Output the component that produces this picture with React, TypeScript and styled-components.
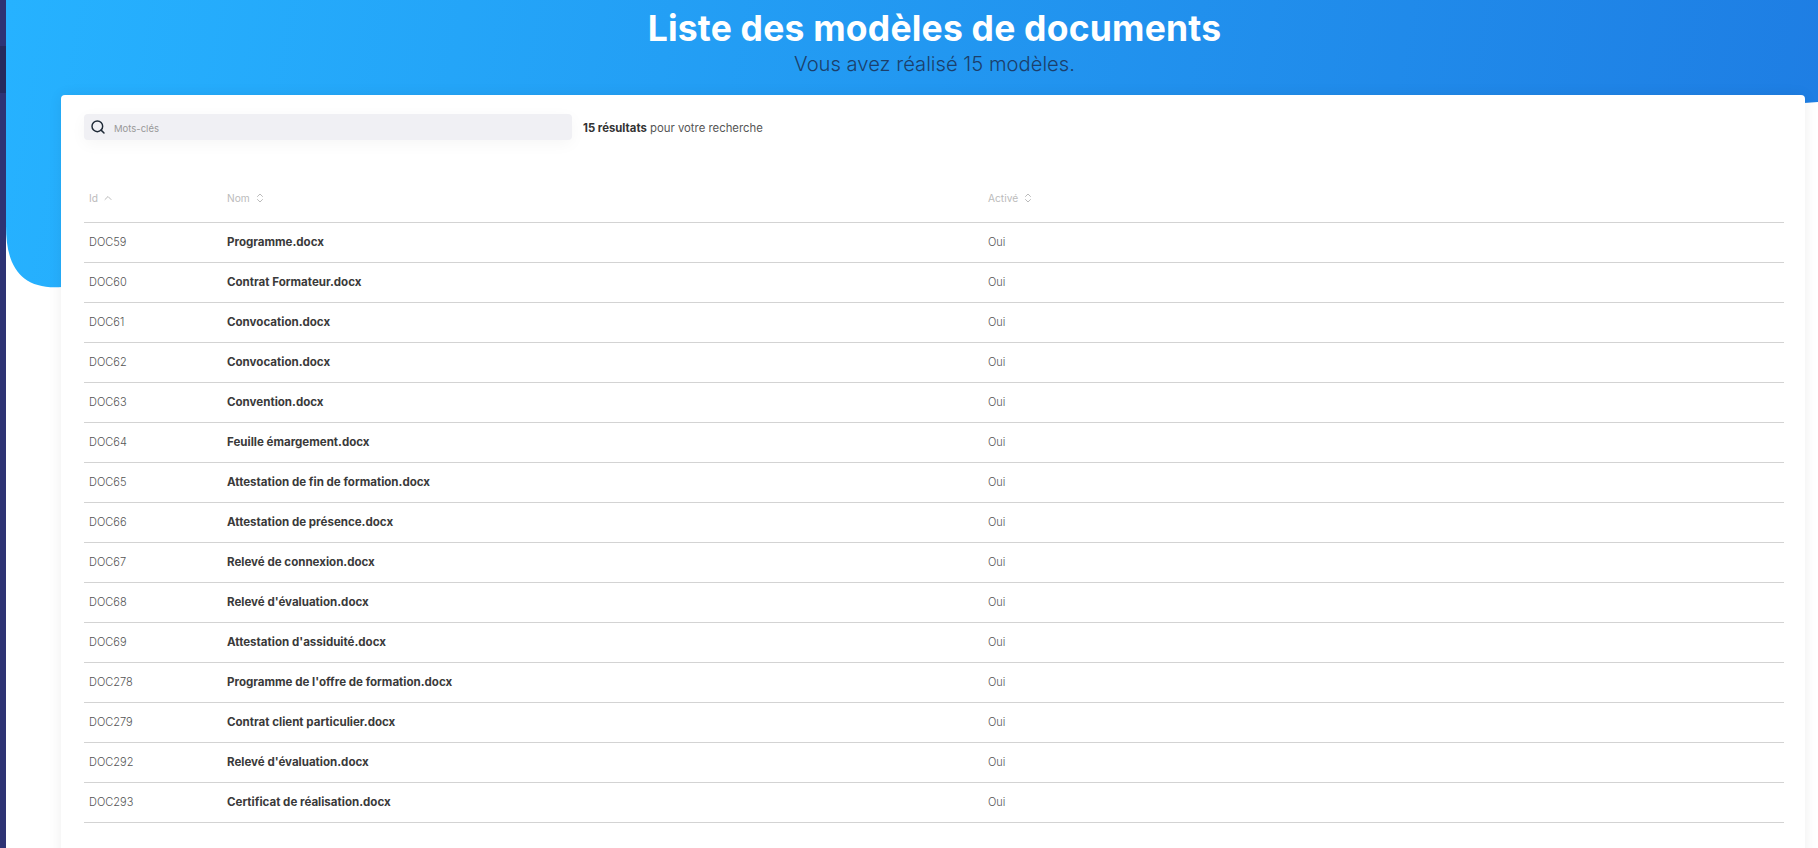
import React from 'react';
import styled, { createGlobalStyle } from 'styled-components';
import { ChevronUp, ChevronsUpDown, Search } from 'lucide-react';

const GlobalStyle = createGlobalStyle`
  html, body {
    margin: 0;
    height: 100%;
    overflow: hidden;
    background: #fff;
    font-family: Inter, "Open Sans", sans-serif;
  }
`;

const Page = styled.div`
  display: flex;
  height: 848px;
  overflow: hidden;
`;

const Sidebar = styled.aside`
  flex: 0 0 6px;
  padding-top: 46px;
  background: #2e3374;
`;

const SidebarActive = styled.div`
  height: 47px;
  background: #262a5c;
`;

const Main = styled.main`
  flex: 1;
  min-width: 0;
`;

const Hero = styled.header`
  box-sizing: border-box;
  height: 288px;
  margin-bottom: -193px;
  padding: 9px 0 0 45px;
  background: linear-gradient(100deg, #26b2ff 0%, #1e7de3 100%);
  clip-path: path('M0 0 H1812 V102 L1798 103 L56 287 C16 290 0 268 0 226 Z');
  text-align: center;
`;

const Title = styled.h1`
  margin: 0;
  color: #fff;
  font-size: 35.5px;
  font-weight: 700;
  line-height: 40px;
  letter-spacing: 0.2px;
`;

const Subtitle = styled.p`
  margin: 0;
  color: #1b3f6b;
  font-size: 20.2px;
  font-weight: 300;
  line-height: 30px;
`;

const Card = styled.section`
  position: relative;
  box-sizing: border-box;
  height: 800px;
  margin: 0 13px 0 55px;
  padding: 19px 21px 0 23px;
  background: #fff;
  border-radius: 4px;
  box-shadow: 0 0 14px rgba(0, 0, 0, 0.07);
`;

const Toolbar = styled.div`
  display: flex;
  align-items: center;
  gap: 11px;
`;

const SearchBox = styled.label`
  box-sizing: border-box;
  display: flex;
  align-items: center;
  gap: 8px;
  width: 488px;
  height: 26px;
  padding-left: 6px;
  background: #f0f0f4;
  border-radius: 4px;
  box-shadow: 0 4px 16px rgba(0, 0, 0, 0.04);
  color: #1f2a37;
`;

const SearchInput = styled.input`
  flex: 1;
  min-width: 0;
  padding: 2px 0 0;
  border: 0;
  outline: 0;
  background: transparent;
  font: inherit;
  font-size: 9.5px;

  &::placeholder {
    color: #999;
    opacity: 1;
  }
`;

const ResultCount = styled.p`
  margin: 0;
  padding-top: 2px;
  color: #555;
  font-size: 11.35px;

  strong {
    color: #333;
    font-weight: 700;
  }
`;

const Table = styled.table`
  width: 100%;
  margin-top: 32px;
  border-collapse: collapse;
  table-layout: fixed;
`;

const HeadCell = styled.th`
  height: 48px;
  padding: 2px 0 0 5px;
  border-bottom: 1px solid #d3d3d3;
  color: #bbb;
  font-size: 10.2px;
  font-weight: 400;
  text-align: left;
`;

const HeadLabel = styled.span`
  display: inline-flex;
  align-items: center;
  gap: 4px;
`;

const Cell = styled.td<{ $strong?: boolean }>`
  height: 37px;
  padding: 0 0 2px 5px;
  border-bottom: 1px solid #d3d3d3;
  color: ${(p) => (p.$strong ? '#3a3a3a' : '#555')};
  font-size: ${(p) => (p.$strong ? '11.55px' : '11px')};
  font-weight: ${(p) => (p.$strong ? 700 : 300)};
`;

const documents = [
  ['DOC59', 'Programme.docx'],
  ['DOC60', 'Contrat Formateur.docx'],
  ['DOC61', 'Convocation.docx'],
  ['DOC62', 'Convocation.docx'],
  ['DOC63', 'Convention.docx'],
  ['DOC64', 'Feuille émargement.docx'],
  ['DOC65', 'Attestation de fin de formation.docx'],
  ['DOC66', 'Attestation de présence.docx'],
  ['DOC67', 'Relevé de connexion.docx'],
  ['DOC68', "Relevé d'évaluation.docx"],
  ['DOC69', "Attestation d'assiduité.docx"],
  ['DOC278', "Programme de l'offre de formation.docx"],
  ['DOC279', 'Contrat client particulier.docx'],
  ['DOC292', "Relevé d'évaluation.docx"],
  ['DOC293', 'Certificat de réalisation.docx'],
];

export default function App() {
  return (
    <Page>
      <GlobalStyle />
      <Sidebar>
        <SidebarActive />
      </Sidebar>
      <Main>
        <Hero>
          <Title>Liste des modèles de documents</Title>
          <Subtitle>Vous avez réalisé 15 modèles.</Subtitle>
        </Hero>
        <Card>
          <Toolbar>
            <SearchBox>
              <Search size={16} strokeWidth={2.2} />
              <SearchInput placeholder="Mots-clés" />
            </SearchBox>
            <ResultCount>
              <strong>15 résultats</strong> pour votre recherche
            </ResultCount>
          </Toolbar>
          <Table>
            <colgroup>
              <col width={138} />
              <col width={761} />
              <col />
            </colgroup>
            <thead>
              <tr>
                <HeadCell>
                  <HeadLabel>
                    Id <ChevronUp size={12} />
                  </HeadLabel>
                </HeadCell>
                <HeadCell>
                  <HeadLabel>
                    Nom <ChevronsUpDown size={12} />
                  </HeadLabel>
                </HeadCell>
                <HeadCell>
                  <HeadLabel>
                    Activé <ChevronsUpDown size={12} />
                  </HeadLabel>
                </HeadCell>
              </tr>
            </thead>
            <tbody>
              {documents.map(([id, name]) => (
                <tr key={id}>
                  <Cell>{id}</Cell>
                  <Cell $strong>{name}</Cell>
                  <Cell>Oui</Cell>
                </tr>
              ))}
            </tbody>
          </Table>
        </Card>
      </Main>
    </Page>
  );
}
